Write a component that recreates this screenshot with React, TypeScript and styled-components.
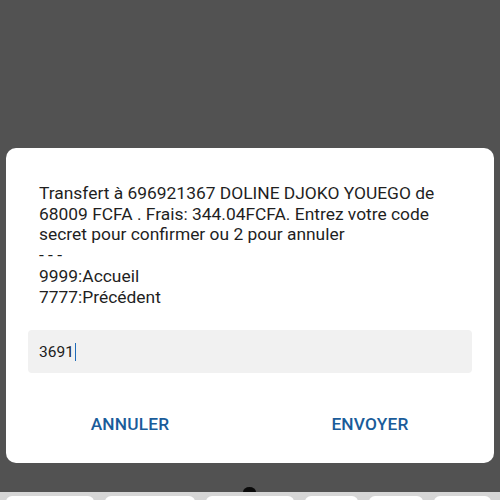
import React from "react";
import styled, { createGlobalStyle } from "styled-components";

const Global = createGlobalStyle`
  html, body { margin: 0; padding: 0; }
  body { background: #525252; font-family: Roboto, "Noto Sans", sans-serif; }
`;

const Screen = styled.div`
  width: 500px;
  height: 500px;
  background: #525252;
  display: flex;
  flex-direction: column;
  overflow: hidden;
`;

const Top = styled.div`
  height: 148px;
  flex: none;
`;

const Dialog = styled.div`
  margin: 0 6px;
  height: 315px;
  background: #ffffff;
  border-radius: 10px;
  display: flex;
  flex-direction: column;
  box-sizing: border-box;
  padding: 35px 22px 0 22px;
`;

const Message = styled.div`
  padding: 0 11px;
  font-size: 17.4px;
  line-height: 20.7px;
  color: #1f1f1f;
  white-space: pre-wrap;
`;

const Field = styled.div`
  margin-top: 23px;
  height: 43px;
  background: #f1f1f1;
  border-radius: 4px;
  display: flex;
  align-items: center;
  padding: 0 11px;
  font-size: 15.5px;
  color: #202020;
`;

const Caret = styled.span`
  display: inline-block;
  width: 1.5px;
  height: 18px;
  background: #1e6bb8;
  margin-left: 1px;
`;

const Actions = styled.div`
  display: grid;
  grid-template-columns: 1fr 1fr;
  margin: 0 -18px;
  margin-top: 40px;
`;

const ActionButton = styled.button`
  border: none;
  background: transparent;
  font-family: Roboto, sans-serif;
  font-weight: 500;
  font-size: 17.3px;
  color: #1a5c9a;
  letter-spacing: 0.2px;
  padding: 0;
  height: 22px;
`;

const Gap = styled.div`
  flex: 1;
  position: relative;
`;

const Handle = styled.div`
  position: absolute;
  left: 243px;
  bottom: 0;
  width: 13px;
  height: 5px;
  border-radius: 50% 50% 0 0 / 100% 100% 0 0;
  background: #0a0a0a;
`;

const Keyboard = styled.div`
  height: 8px;
  flex: none;
  background: #d6d6d6;
  display: flex;
  padding: 4px 6px 0 6px;
  box-sizing: border-box;
  gap: 11px;
`;

const Key = styled.div<{ $w: number }>`
  width: ${(p) => p.$w}px;
  height: 20px;
  background: #ffffff;
  border-radius: 6px 6px 0 0;
  flex: none;
`;

export default function App() {
  const msg =
    "Transfert à 696921367 DOLINE DJOKO YOUEGO de\n68009 FCFA . Frais: 344.04FCFA. Entrez votre code\nsecret pour confirmer ou 2 pour annuler\n- - -\n9999:Accueil\n7777:Précédent";
  const keys = [88, 90, 88, 53, 54, 57];
  return (
    <Screen>
      <Global />
      <Top />
      <Dialog>
        <Message>{msg}</Message>
        <Field>
          3691
          <Caret />
        </Field>
        <Actions>
          <ActionButton>ANNULER</ActionButton>
          <ActionButton>ENVOYER</ActionButton>
        </Actions>
      </Dialog>
      <Gap>
        <Handle />
      </Gap>
      <Keyboard>
        {keys.map((w, i) => (
          <Key key={i} $w={w} />
        ))}
      </Keyboard>
    </Screen>
  );
}
